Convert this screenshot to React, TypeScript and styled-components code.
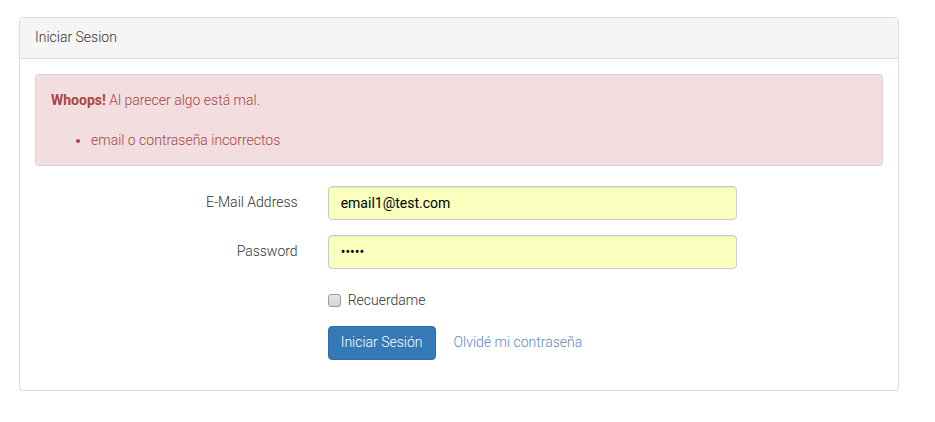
import React from "react";
import styled, { createGlobalStyle } from "styled-components";

const GlobalStyle = createGlobalStyle`
  * { box-sizing: border-box; }
  body {
    margin: 0;
    background: #fff;
    font-family: Roboto, "Liberation Sans", sans-serif;
    font-weight: 300;
    font-size: 14px;
    line-height: 1.42857;
    color: #333;
  }
`;

const Page = styled.div`
  padding: 17px 36px 0 19px;
`;

const Panel = styled.div`
  border: 1px solid #ddd;
  border-radius: 4px;
  background: #fff;
  box-shadow: 0 1px 1px rgba(0, 0, 0, 0.05);
`;

const PanelHeading = styled.div`
  padding: 10px 15px;
  background: #f5f5f5;
  border-bottom: 1px solid #ddd;
  border-radius: 3px 3px 0 0;
  color: #333;
`;

const PanelBody = styled.div`
  padding: 15px;
`;

const Alert = styled.div`
  padding: 15px;
  margin-bottom: 20px;
  border: 1px solid #ebccd1;
  border-radius: 4px;
  background: #f2dede;
  color: #a94442;
  line-height: 20px;

  strong {
    font-weight: 700;
  }
`;

const ErrorList = styled.ul`
  margin: 20px 0 0;
  padding-left: 40px;
`;

const Row = styled.div`
  display: grid;
  grid-template-columns: 4fr 6fr 2fr;
  margin: 0 -15px 15px;
  align-items: center;
`;

const Label = styled.label`
  padding: 0 15px;
  text-align: right;
  color: #333;
  justify-self: end;
`;

const Field = styled.div`
  grid-column: 2;
  padding: 0 15px;
  display: flex;
  align-items: center;
`;

const Input = styled.input`
  width: 100%;
  height: 34px;
  padding: 6px 12px;
  font: inherit;
  font-weight: 400;
  color: #000;
  background: #faffbd;
  border: 1px solid #ccc;
  border-radius: 4px;
  box-shadow: inset 0 1px 1px rgba(0, 0, 0, 0.075);
  outline: none;
`;

const CheckLabel = styled.label`
  display: flex;
  align-items: center;
  gap: 7px;
  padding-top: 7px;
  height: 27px;
`;

const Box = styled.input`
  appearance: none;
  margin: 0;
  width: 13px;
  height: 13px;
  border: 1px solid #9a9a9a;
  border-radius: 3px;
  background: linear-gradient(#e8e8e8, #d4d4d4);
`;

const Button = styled.button`
  height: 34px;
  padding: 6px 12px;
  font: inherit;
  color: #fff;
  background: #337ab7;
  border: 1px solid #2e6da4;
  border-radius: 4px;
  cursor: pointer;
`;

const LinkButton = styled.a`
  margin-left: 6px;
  padding: 6px 12px;
  color: #5c89c1;
  text-decoration: none;
`;

export default function App() {
  return (
    <Page>
      <GlobalStyle />
      <Panel>
        <PanelHeading>Iniciar Sesion</PanelHeading>
        <PanelBody>
          <Alert>
            <strong>Whoops!</strong> Al parecer algo está mal.
            <ErrorList>
              <li>email o contraseña incorrectos</li>
            </ErrorList>
          </Alert>
          <Row>
            <Label htmlFor="email">E-Mail Address</Label>
            <Field>
              <Input id="email" type="email" defaultValue="email1@test.com" />
            </Field>
          </Row>
          <Row>
            <Label htmlFor="password">Password</Label>
            <Field>
              <Input id="password" type="password" defaultValue="12345" />
            </Field>
          </Row>
          <Row>
            <Field>
              <CheckLabel>
                <Box type="checkbox" />
                Recuerdame
              </CheckLabel>
            </Field>
          </Row>
          <Row>
            <Field>
              <Button type="submit">Iniciar Sesión</Button>
              <LinkButton href="#">Olvidé mi contraseña</LinkButton>
            </Field>
          </Row>
        </PanelBody>
      </Panel>
    </Page>
  );
}
